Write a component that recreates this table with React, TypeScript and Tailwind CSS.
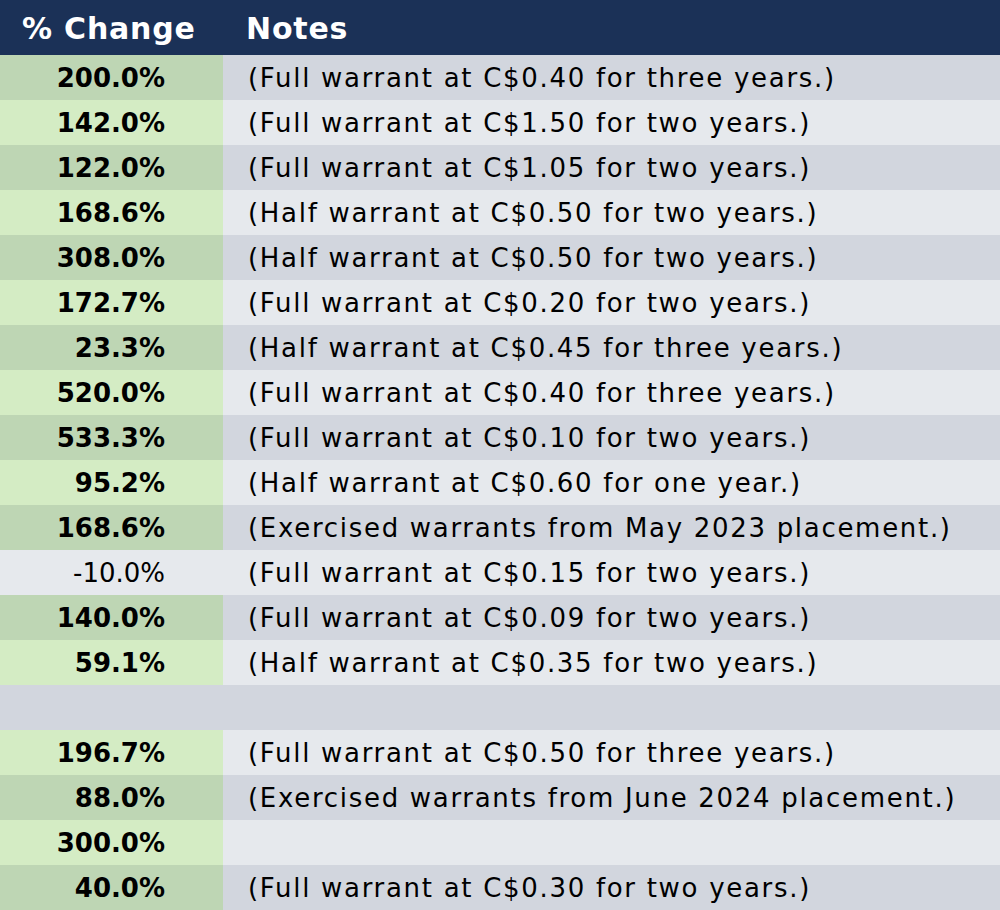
import React from "react";

type Row = { v: string; n: string; kind: "green" | "gray" | "empty" };

const rows: Row[] = [
  { v: "200.0%", n: "(Full warrant at C$0.40 for three years.)", kind: "green" },
  { v: "142.0%", n: "(Full warrant at C$1.50 for two years.)", kind: "green" },
  { v: "122.0%", n: "(Full warrant at C$1.05 for two years.)", kind: "green" },
  { v: "168.6%", n: "(Half warrant at C$0.50 for two years.)", kind: "green" },
  { v: "308.0%", n: "(Half warrant at C$0.50 for two years.)", kind: "green" },
  { v: "172.7%", n: "(Full warrant at C$0.20 for two years.)", kind: "green" },
  { v: "23.3%", n: "(Half warrant at C$0.45 for three years.)", kind: "green" },
  { v: "520.0%", n: "(Full warrant at C$0.40 for three years.)", kind: "green" },
  { v: "533.3%", n: "(Full warrant at C$0.10 for two years.)", kind: "green" },
  { v: "95.2%", n: "(Half warrant at C$0.60 for one year.)", kind: "green" },
  { v: "168.6%", n: "(Exercised warrants from May 2023 placement.)", kind: "green" },
  { v: "-10.0%", n: "(Full warrant at C$0.15 for two years.)", kind: "gray" },
  { v: "140.0%", n: "(Full warrant at C$0.09 for two years.)", kind: "green" },
  { v: "59.1%", n: "(Half warrant at C$0.35 for two years.)", kind: "green" },
  { v: "", n: "", kind: "empty" },
  { v: "196.7%", n: "(Full warrant at C$0.50 for three years.)", kind: "green" },
  { v: "88.0%", n: "(Exercised warrants from June 2024 placement.)", kind: "green" },
  { v: "300.0%", n: "", kind: "green" },
  { v: "40.0%", n: "(Full warrant at C$0.30 for two years.)", kind: "green" },
];

export default function App() {
  return (
    <div
      className="w-[1000px] h-[910px] overflow-hidden"
      style={{ fontFamily: "'DejaVu Sans', 'Noto Sans', sans-serif" }}
    >
      <div className="grid grid-cols-[223px_1fr] h-[55px] bg-[#1b3157] text-white font-bold text-[30px] tracking-[0.8px] items-center">
        <div className="pl-[22px] pt-[1px]">% Change</div>
        <div className="pl-[23px] pt-[1px]">Notes</div>
      </div>
      {rows.map((r, i) => {
        const dark = i % 2 === 0;
        const leftBg =
          r.kind === "green"
            ? dark
              ? "bg-[#bed6b4]"
              : "bg-[#d4ecc4]"
            : dark
            ? "bg-[#d2d6de]"
            : "bg-[#e6e9ed]";
        const rightBg = dark ? "bg-[#d2d6de]" : "bg-[#e6e9ed]";
        return (
          <div key={i} className="grid grid-cols-[223px_1fr] h-[45px] text-[26px] text-black">
            <div
              className={`${leftBg} flex items-center justify-end pr-[58px] pt-[2px] ${
                r.kind === "gray" ? "font-normal" : "font-bold"
              }`}
            >
              {r.v}
            </div>
            <div
              className={`${rightBg} flex items-center pl-[25px] pt-[1px] whitespace-nowrap tracking-[1.7px]`}
            >
              {r.n}
            </div>
          </div>
        );
      })}
    </div>
  );
}
